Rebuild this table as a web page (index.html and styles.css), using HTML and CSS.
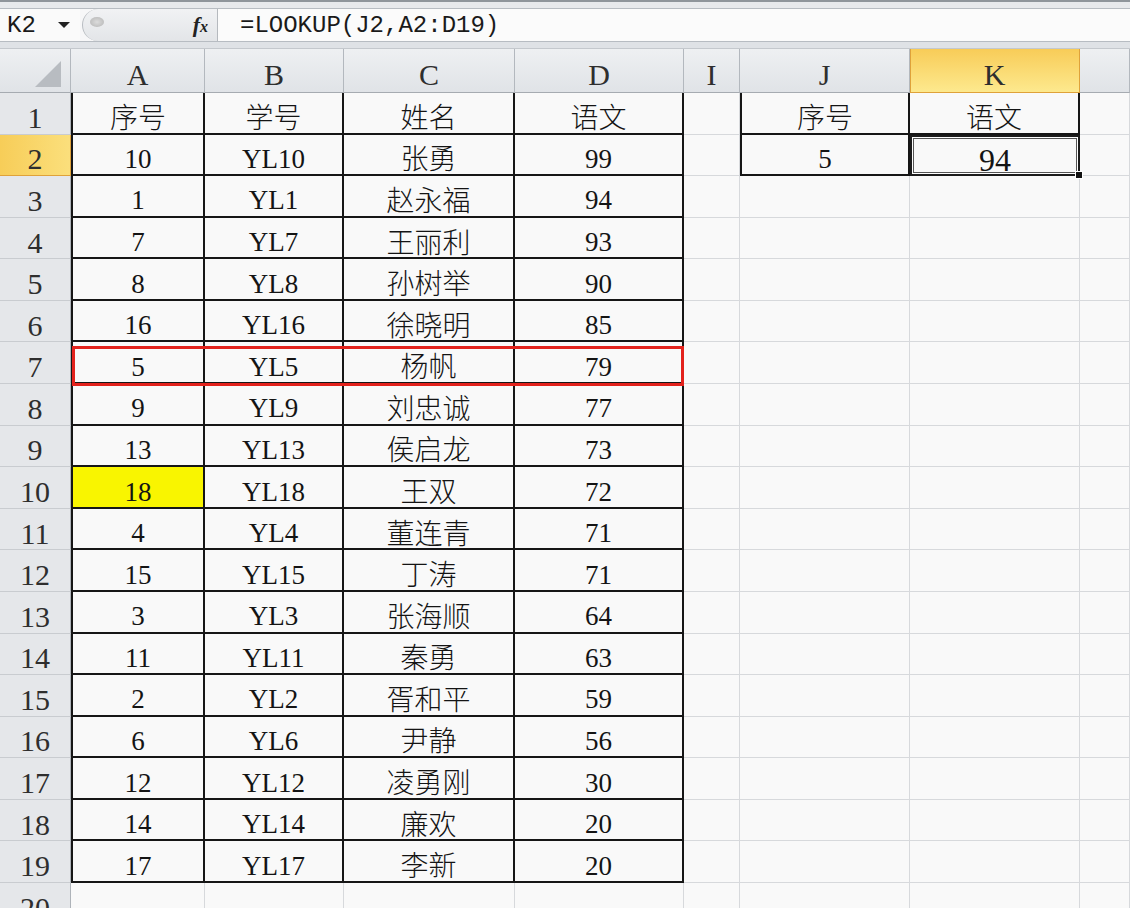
FILE: index.html
```html
<!DOCTYPE html>
<html lang="zh">
<head>
<meta charset="utf-8">
<title>LOOKUP</title>
<link rel="stylesheet" href="styles.css">
</head>
<body>
<div class="app">
  <div class="topband"></div>
  <div class="fbar">
    <div class="namebox"><span class="ref">K2</span><span class="caret"></span></div>
    <div class="pill"><span class="knob"></span><span class="fx">f<span class="fx-x">x</span></span></div>
    <div class="formula">=LOOKUP(J2,A2:D19)</div>
  </div>
  <div class="gap"></div>
  <div class="sheet">
    <div class="corner"><span class="tri"></span></div>
    <div class="ch">A</div><div class="ch">B</div><div class="ch">C</div><div class="ch">D</div><div class="ch">I</div><div class="ch">J</div><div class="ch sel">K</div><div class="ch"></div>

    <div class="rh">1</div><div class="c t tl zh">序号</div><div class="c t zh">学号</div><div class="c t zh">姓名</div><div class="c t zh">语文</div><div class="c"></div><div class="c t tl zh">序号</div><div class="c t zh">语文</div><div class="c"></div>
    <div class="rh sel">2</div><div class="c t tl">10</div><div class="c t">YL10</div><div class="c t zh">张勇</div><div class="c t">99</div><div class="c"></div><div class="c t tl">5</div><div class="c t k2">94<span class="handle"></span></div><div class="c"></div>
    <div class="rh">3</div><div class="c t tl">1</div><div class="c t">YL1</div><div class="c t zh">赵永福</div><div class="c t">94</div><div class="c"></div><div class="c"></div><div class="c"></div><div class="c"></div>
    <div class="rh">4</div><div class="c t tl">7</div><div class="c t">YL7</div><div class="c t zh">王丽利</div><div class="c t">93</div><div class="c"></div><div class="c"></div><div class="c"></div><div class="c"></div>
    <div class="rh">5</div><div class="c t tl">8</div><div class="c t">YL8</div><div class="c t zh">孙树举</div><div class="c t">90</div><div class="c"></div><div class="c"></div><div class="c"></div><div class="c"></div>
    <div class="rh">6</div><div class="c t tl">16</div><div class="c t">YL16</div><div class="c t zh">徐晓明</div><div class="c t">85</div><div class="c"></div><div class="c"></div><div class="c"></div><div class="c"></div>
    <div class="rh">7</div><div class="c t tl">5</div><div class="c t">YL5</div><div class="c t zh">杨帆</div><div class="c t">79</div><div class="c"></div><div class="c"></div><div class="c"></div><div class="c"></div>
    <div class="rh">8</div><div class="c t tl">9</div><div class="c t">YL9</div><div class="c t zh">刘忠诚</div><div class="c t">77</div><div class="c"></div><div class="c"></div><div class="c"></div><div class="c"></div>
    <div class="rh">9</div><div class="c t tl">13</div><div class="c t">YL13</div><div class="c t zh">侯启龙</div><div class="c t">73</div><div class="c"></div><div class="c"></div><div class="c"></div><div class="c"></div>
    <div class="rh">10</div><div class="c t tl hl">18</div><div class="c t">YL18</div><div class="c t zh">王双</div><div class="c t">72</div><div class="c"></div><div class="c"></div><div class="c"></div><div class="c"></div>
    <div class="rh">11</div><div class="c t tl">4</div><div class="c t">YL4</div><div class="c t zh">董连青</div><div class="c t">71</div><div class="c"></div><div class="c"></div><div class="c"></div><div class="c"></div>
    <div class="rh">12</div><div class="c t tl">15</div><div class="c t">YL15</div><div class="c t zh">丁涛</div><div class="c t">71</div><div class="c"></div><div class="c"></div><div class="c"></div><div class="c"></div>
    <div class="rh">13</div><div class="c t tl">3</div><div class="c t">YL3</div><div class="c t zh">张海顺</div><div class="c t">64</div><div class="c"></div><div class="c"></div><div class="c"></div><div class="c"></div>
    <div class="rh">14</div><div class="c t tl">11</div><div class="c t">YL11</div><div class="c t zh">秦勇</div><div class="c t">63</div><div class="c"></div><div class="c"></div><div class="c"></div><div class="c"></div>
    <div class="rh">15</div><div class="c t tl">2</div><div class="c t">YL2</div><div class="c t zh">胥和平</div><div class="c t">59</div><div class="c"></div><div class="c"></div><div class="c"></div><div class="c"></div>
    <div class="rh">16</div><div class="c t tl">6</div><div class="c t">YL6</div><div class="c t zh">尹静</div><div class="c t">56</div><div class="c"></div><div class="c"></div><div class="c"></div><div class="c"></div>
    <div class="rh">17</div><div class="c t tl">12</div><div class="c t">YL12</div><div class="c t zh">凌勇刚</div><div class="c t">30</div><div class="c"></div><div class="c"></div><div class="c"></div><div class="c"></div>
    <div class="rh">18</div><div class="c t tl">14</div><div class="c t">YL14</div><div class="c t zh">廉欢</div><div class="c t">20</div><div class="c"></div><div class="c"></div><div class="c"></div><div class="c"></div>
    <div class="rh">19</div><div class="c t tl">17</div><div class="c t">YL17</div><div class="c t zh">李新</div><div class="c t">20</div><div class="c"></div><div class="c"></div><div class="c"></div><div class="c"></div>
    <div class="rh">20</div><div class="c"></div><div class="c"></div><div class="c"></div><div class="c"></div><div class="c"></div><div class="c"></div><div class="c"></div><div class="c"></div>

    <div class="redbox"></div>
  </div>
</div>
</body>
</html>
```

FILE: styles.css
```css
* { box-sizing: border-box; }
body { margin: 0; background: #f8f8f8; }

.app {
  width: 1130px;
  height: 908px;
  overflow: hidden;
  font-family: "Liberation Serif", "Noto Sans CJK SC", serif;
  color: #141414;
  background: #f8f8f8;
}

.topband {
  height: 8px;
  border-top: 2px solid #8f959b;
  background: #e7e9ec;
}

.fbar {
  height: 34px;
  display: flex;
  background: #f7f7f8;
  border-top: 1px solid #b7bcc2;
  border-bottom: 1px solid #b7bcc2;
}

.namebox {
  width: 80px;
  display: flex;
  align-items: center;
  padding-left: 7px;
  font-family: "Liberation Mono", monospace;
  font-size: 24px;
  color: #1a1a1a;
  background: #fafafa;
}

.caret {
  margin-left: 22px;
  width: 0;
  height: 0;
  border-left: 6px solid transparent;
  border-right: 6px solid transparent;
  border-top: 6px solid #222;
}

.pill {
  width: 136px;
  margin-left: 2px;
  border-left: 1px solid #b9bdc2;
  border-right: 1px solid #b5b9be;
  border-radius: 17px 0 0 17px;
  background: linear-gradient(#f1f2f4, #e3e5e8);
  display: flex;
  align-items: center;
  justify-content: space-between;
  padding: 0 9px 0 7px;
}

.knob {
  width: 14px;
  height: 10px;
  margin-top: -6px;
  border-radius: 50%;
  background: radial-gradient(#dcdcdc, #b3b3b3);
}

.fx {
  font-family: "Liberation Serif", serif;
  font-weight: bold;
  font-style: italic;
  font-size: 22px;
  color: #222;
}

.fx-x {
  font-size: 16px;
}

.formula {
  flex: 1;
  display: flex;
  align-items: center;
  padding-left: 22px;
  font-family: "Liberation Mono", monospace;
  font-size: 24px;
  color: #1a1a1a;
  background: #fbfbfb;
}

.gap {
  height: 7px;
  background: #dfe2e6;
  border-bottom: 1px solid #c4c8cd;
}

.sheet {
  position: relative;
  display: grid;
  grid-template-columns: 71px 134px 139px 171px 169px 56px 170px 170px 1fr;
  grid-template-rows: 44px repeat(20, 41.58px);
}

.corner {
  background: linear-gradient(#eef0f2, #e0e3e7);
  border-right: 1px solid #b3b8be;
  border-bottom: 1px solid #a6abb1;
  display: flex;
  align-items: flex-end;
  justify-content: flex-end;
  padding: 0 9px 5px 0;
}

.tri {
  width: 0;
  height: 0;
  border-left: 26px solid transparent;
  border-bottom: 26px solid #b8bcc1;
}

.ch {
  background: linear-gradient(#eef0f2, #e0e3e7);
  border-right: 1px solid #b3b8be;
  border-bottom: 1px solid #a6abb1;
  display: flex;
  align-items: center;
  justify-content: center;
  padding-top: 8px;
  font-size: 30px;
  color: #2e2e2e;
}

.ch.sel {
  background: linear-gradient(#f8cc58, #fde98e);
  border-right-color: #dfa23a;
  border-bottom-color: #dfa23a;
  box-shadow: inset 1px 0 0 #dfa23a;
}

.rh {
  background: #e5e7ea;
  border-right: 1px solid #aeb3b9;
  border-bottom: 1px solid #c9ccd0;
  display: flex;
  align-items: center;
  justify-content: center;
  padding-top: 9px;
  font-size: 30px;
  color: #2e2e2e;
}

.rh.sel {
  background: linear-gradient(90deg, #f7cd58, #fbdf7c);
  border-bottom-color: #dfa23a;
  border-right-color: #dfa23a;
}

.c {
  background: #f9f9f9;
  border-right: 1px solid #d7d9dc;
  border-bottom: 1px solid #d7d9dc;
  display: flex;
  align-items: center;
  justify-content: center;
  padding-top: 10px;
  font-size: 27px;
}

.t {
  border-right: 2px solid #161616;
  border-bottom: 2px solid #161616;
}

.tl {
  border-left: 2px solid #161616;
}

.zh {
  font-family: "Noto Sans CJK SC", sans-serif;
  font-size: 28px;
  font-weight: 300;
  padding-top: 6px;
}

.hl {
  background: #f9f500;
}

.k2 {
  position: relative;
  font-size: 32px;
  border: 2px solid #1c1c1c;
  box-shadow: inset 0 0 0 1px #ffffff, inset 0 0 0 2px #555;
}

.handle {
  position: absolute;
  right: -5px;
  bottom: -5px;
  width: 8px;
  height: 8px;
  background: #111;
  border: 1px solid #fff;
}

.redbox {
  position: absolute;
  left: 72px;
  top: 297px;
  width: 612px;
  height: 40px;
  border: 3px solid #e3221c;
  pointer-events: none;
}
```
